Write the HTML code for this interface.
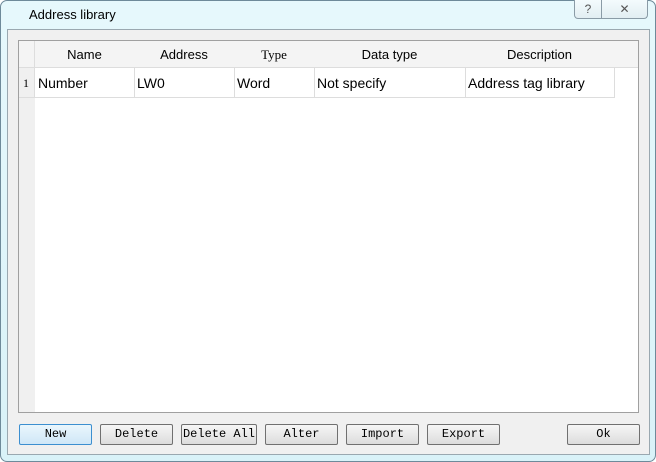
<!DOCTYPE html>
<html><head><style>
*{margin:0;padding:0;box-sizing:border-box}
body{width:656px;height:462px;overflow:hidden;background:#fff;font-family:"Liberation Sans",sans-serif;position:relative}
.win{position:absolute;left:0;top:0;width:656px;height:462px;border:1px solid #6e8a9a;border-radius:7px;background:linear-gradient(#e6f8fc,#d9f2f8);}
.title{position:absolute;left:29px;top:7px;font-size:13px;color:#000}
.client{position:absolute;left:7px;top:29px;width:643px;height:426px;background:#f0f0f0;border:1px solid #9aa8b0}
.cb{position:absolute;top:0;height:19px;border:1px solid #8a9ba6;border-top:none;background:linear-gradient(#f4fbfd,#e2eef2);font-size:12px;color:#555;text-align:center;line-height:18px}
.list{position:absolute;left:18px;top:40px;width:621px;height:373px;background:#fff;border:1px solid #a0a0a0}
.rn{position:absolute;left:0;top:0;width:16px;height:371px;background:#f0f0f0}
.hdr{position:absolute;top:0;height:27px;background:#f4f4f4;border-right:1px solid #ddd;border-bottom:1px solid #ddd;font-size:13px;text-align:center;line-height:28px}
.cell{position:absolute;top:27px;height:30px;border-right:1px solid #ddd;border-bottom:1px solid #ddd;font-size:14px;line-height:31px;padding-left:3px;white-space:nowrap}
.btn{position:absolute;top:424px;height:21px;border:1px solid #707070;border-radius:2px;background:linear-gradient(#f6f6f6,#dcdcdc);font-family:"Liberation Mono",monospace;font-size:12px;text-align:center;line-height:19px}
</style></head><body>
<div class="win"></div>
<div class="title">Address library</div>
<div class="cb" style="left:574px;width:28px;border-bottom-left-radius:4px">?</div>
<div class="cb" style="left:601px;width:47px;border-bottom-right-radius:4px">✕</div>
<div class="client"></div>
<div class="list">
<div class="rn"></div>
<div class="hdr" style="left:0;width:16px"></div>
<div class="hdr" style="left:16px;width:100px">Name</div>
<div class="hdr" style="left:115px;width:101px">Address</div>
<div class="hdr" style="left:215px;width:81px;font-family:'Liberation Serif',serif">Type</div>
<div class="hdr" style="left:295px;width:152px">Data type</div>
<div class="hdr" style="left:446px;width:150px">Description</div>
<div class="hdr" style="left:595px;width:24px;border-right:none"></div>
<div class="cell" style="left:0;width:16px;background:#f0f0f0;font-family:'Liberation Serif',serif;font-size:12px;padding-left:4px">1</div>
<div class="cell" style="left:16px;width:100px">Number</div>
<div class="cell" style="left:115px;width:101px">LW0</div>
<div class="cell" style="left:215px;width:81px">Word</div>
<div class="cell" style="left:295px;width:152px">Not specify</div>
<div class="cell" style="left:446px;width:150px">Address tag library</div>
</div>
<div class="btn" style="left:19px;width:73px;border-color:#3c8fd0;background:linear-gradient(#eaf6fd,#cfe7f7)">New</div>
<div class="btn" style="left:100px;width:73px">Delete</div>
<div class="btn" style="left:181px;width:76px">Delete All</div>
<div class="btn" style="left:265px;width:73px">Alter</div>
<div class="btn" style="left:346px;width:73px">Import</div>
<div class="btn" style="left:427px;width:73px">Export</div>
<div class="btn" style="left:567px;width:73px">Ok</div>
</body></html>
